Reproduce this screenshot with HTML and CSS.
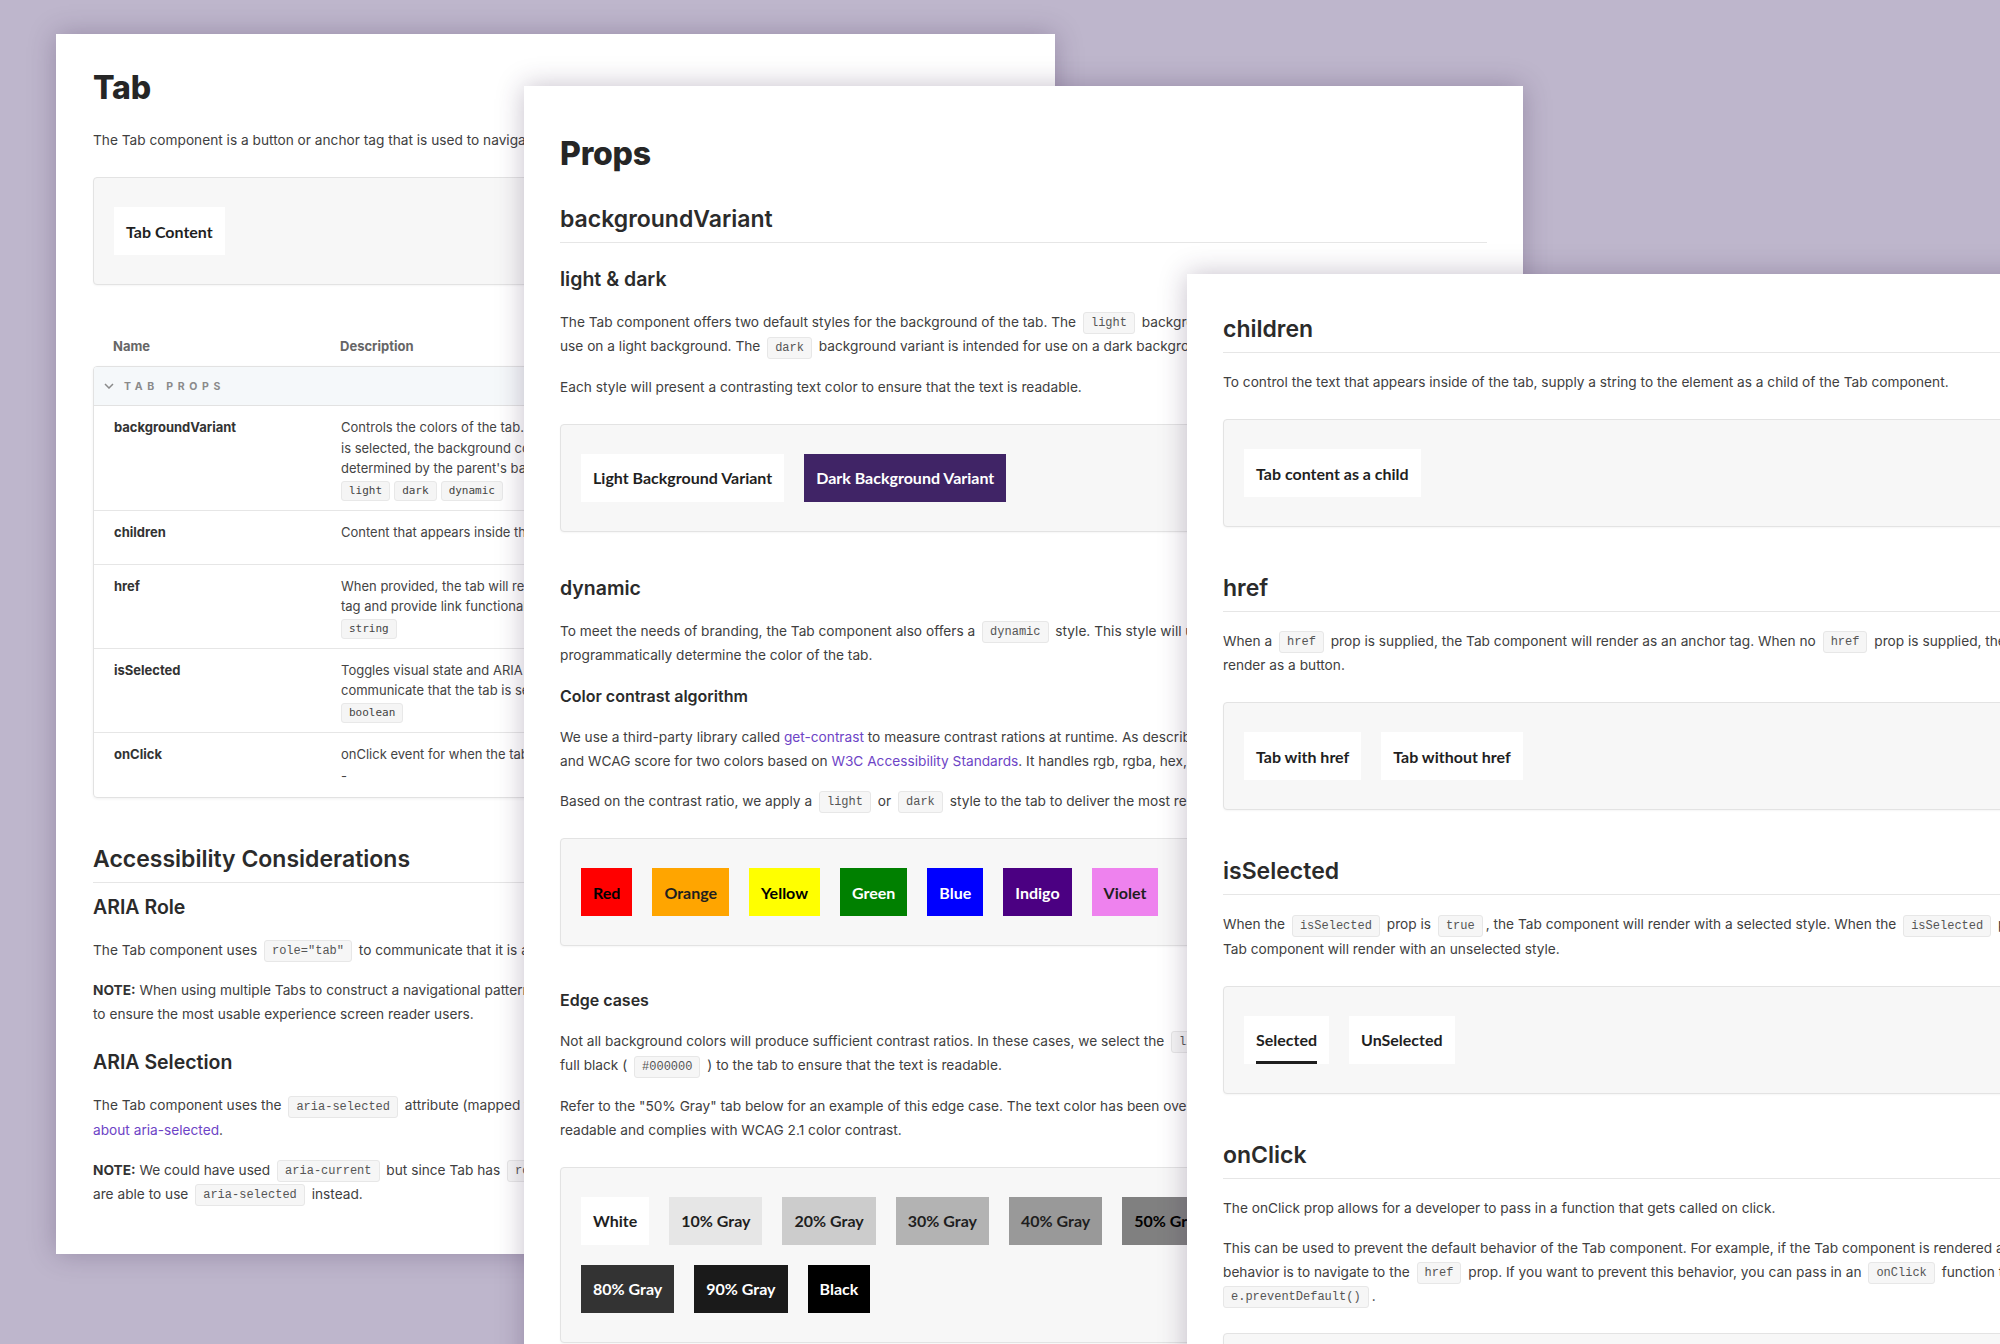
FILE: index.html
```html
<!DOCTYPE html>
<html lang="en">
<head>
<meta charset="utf-8">
<title>Tab docs</title>
<link rel="stylesheet" href="styles.css">
</head>
<body>
<div class="desk">

  <section class="win win-1">
    <h1 class="title title-1">Tab</h1>
    <p class="text">The Tab component is a button or anchor tag that is used to navigate between related views of content within the same page or section.</p>
    <div class="demo">
      <span class="tab">Tab Content</span>
    </div>

    <div class="props-head">
      <span>Name</span>
      <span>Description</span>
    </div>
    <div class="props">
      <div class="group">
        <svg class="chev" width="10" height="6" viewBox="0 0 10 6"><polyline points="1,1 5,5 9,1" fill="none" stroke="#8a8a8a" stroke-width="1.5"/></svg>
        <span class="group-label">TAB PROPS</span>
      </div>
      <div class="row">
        <div class="name">backgroundVariant</div>
        <div class="desc">
          <div>Controls the colors of the tab. When the tab is in its default state and</div>
          <div>is selected, the background color of the tab is either light, dark or</div>
          <div>determined by the parent's background color when dynamic is used.</div>
          <div class="types"><span class="chip-sm">light</span><span class="chip-sm">dark</span><span class="chip-sm">dynamic</span></div>
        </div>
      </div>
      <div class="row">
        <div class="name">children</div>
        <div class="desc">
          <div>Content that appears inside the tab.</div>
          <div class="types-empty"></div>
        </div>
      </div>
      <div class="row">
        <div class="name">href</div>
        <div class="desc">
          <div>When provided, the tab will render as an anchor</div>
          <div>tag and provide link functionality.</div>
          <div class="types"><span class="chip-sm">string</span></div>
        </div>
      </div>
      <div class="row">
        <div class="name">isSelected</div>
        <div class="desc">
          <div>Toggles visual state and ARIA values used to</div>
          <div>communicate that the tab is selected.</div>
          <div class="types"><span class="chip-sm">boolean</span></div>
        </div>
      </div>
      <div class="row">
        <div class="name">onClick</div>
        <div class="desc">
          <div>onClick event for when the tab is clicked.</div>
          <div class="dash">-</div>
        </div>
      </div>
    </div>

    <h2 class="h2 h2-tight">Accessibility Considerations</h2>
    <h3 class="h3 h3-tight">ARIA Role</h3>
    <p class="text">The Tab component uses <code class="code">role="tab"</code> to communicate that it is a tab within a tablist.</p>
    <p class="text"><strong class="strong">NOTE:</strong> When using multiple Tabs to construct a navigational pattern, wrap them in an element with role="tablist"<br>to ensure the most usable experience screen reader users.</p>
    <h3 class="h3">ARIA Selection</h3>
    <p class="text">The Tab component uses the <code class="code">aria-selected</code> attribute (mapped to the isSelected prop) to communicate selection. Learn more<br><a class="link" href="#">about aria-selected</a>.</p>
    <p class="text"><strong class="strong">NOTE:</strong> We could have used <code class="code">aria-current</code> but since Tab has <code class="code">role="tab"</code> we<br>are able to use <code class="code">aria-selected</code> instead.</p>
  </section>

  <section class="win win-2">
    <h1 class="title title-2">Props</h1>
    <h2 class="h2 h2-first">backgroundVariant</h2>
    <h3 class="h3 h3-after-h2">light &amp; dark</h3>
    <p class="text">The Tab component offers two default styles for the background of the tab. The <code class="code">light</code> background variant is intended for<br>use on a light background. The <code class="code">dark</code> background variant is intended for use on a dark background.</p>
    <p class="text">Each style will present a contrasting text color to ensure that the text is readable.</p>
    <div class="demo">
      <span class="tab">Light Background Variant</span>
      <span class="tab tab-dark">Dark Background Variant</span>
    </div>

    <h3 class="h3 after-demo">dynamic</h3>
    <p class="text">To meet the needs of branding, the Tab component also offers a <code class="code">dynamic</code> style. This style will use the parent's background color to<br>programmatically determine the color of the tab.</p>
    <h4 class="h4">Color contrast algorithm</h4>
    <p class="text">We use a third-party library called <a class="link" href="#">get-contrast</a> to measure contrast rations at runtime. As described, it returns the ratio<br>and WCAG score for two colors based on <a class="link" href="#">W3C Accessibility Standards</a>. It handles rgb, rgba, hex, hsl and named colors.</p>
    <p class="text">Based on the contrast ratio, we apply a <code class="code">light</code> or <code class="code">dark</code> style to the tab to deliver the most readable result.</p>
    <div class="demo">
      <span class="tab c-red">Red</span>
      <span class="tab c-orange">Orange</span>
      <span class="tab c-yellow">Yellow</span>
      <span class="tab c-green">Green</span>
      <span class="tab c-blue">Blue</span>
      <span class="tab c-indigo">Indigo</span>
      <span class="tab c-violet">Violet</span>
    </div>

    <h4 class="h4 after-demo">Edge cases</h4>
    <p class="text">Not all background colors will produce sufficient contrast ratios. In these cases, we select the <code class="code">light</code> style and apply<br>full black ( <code class="code">#000000</code> ) to the tab to ensure that the text is readable.</p>
    <p class="text">Refer to the "50% Gray" tab below for an example of this edge case. The text color has been overridden so it is<br>readable and complies with WCAG 2.1 color contrast.</p>
    <div class="demo">
      <span class="tab g-0">White</span>
      <span class="tab g-10">10% Gray</span>
      <span class="tab g-20">20% Gray</span>
      <span class="tab g-30">30% Gray</span>
      <span class="tab g-40">40% Gray</span>
      <span class="tab g-50">50% Gray</span>
      <span class="tab g-60">60% Gray</span>
      <span class="tab g-70">70% Gray</span>
      <span class="tab g-80">80% Gray</span>
      <span class="tab g-90">90% Gray</span>
      <span class="tab g-100">Black</span>
    </div>
  </section>

  <section class="win win-3">
    <h2 class="h2 h2-first">children</h2>
    <p class="text">To control the text that appears inside of the tab, supply a string to the element as a child of the Tab component.</p>
    <div class="demo">
      <span class="tab">Tab content as a child</span>
    </div>

    <h2 class="h2">href</h2>
    <p class="text">When a <code class="code">href</code> prop is supplied, the Tab component will render as an anchor tag. When no <code class="code">href</code> prop is supplied, the Tab component will<br>render as a button.</p>
    <div class="demo">
      <span class="tab">Tab with href</span>
      <span class="tab">Tab without href</span>
    </div>

    <h2 class="h2">isSelected</h2>
    <p class="text">When the <code class="code">isSelected</code> prop is <code class="code">true</code>, the Tab component will render with a selected style. When the <code class="code">isSelected</code> prop is false, the<br>Tab component will render with an unselected style.</p>
    <div class="demo">
      <span class="tab tab-selected">Selected</span>
      <span class="tab">UnSelected</span>
    </div>

    <h2 class="h2">onClick</h2>
    <p class="text">The onClick prop allows for a developer to pass in a function that gets called on click.</p>
    <p class="text">This can be used to prevent the default behavior of the Tab component. For example, if the Tab component is rendered as an anchor, the default<br>behavior is to navigate to the <code class="code">href</code> prop. If you want to prevent this behavior, you can pass in an <code class="code">onClick</code> function that calls<br><code class="code code-first">e.preventDefault()</code>.</p>
    <div class="demo">
      <span class="tab">Tab with onClick</span>
    </div>
  </section>

</div>
</body>
</html>
```
FILE: styles.css
```css
html, body {
  margin: 0;
  padding: 0;
}

body {
  width: 2000px;
  height: 1344px;
  overflow: hidden;
  background: #beb6cc;
  font-family: Inter, "Noto Sans", sans-serif;
  color: #404040;
}

.desk {
  position: relative;
  width: 2000px;
  height: 1344px;
  overflow: hidden;
}

/* windows on the desktop */
.win {
  position: absolute;
  width: 999px;
  box-sizing: border-box;
  background: #fff;
  padding-left: 37px;
  padding-right: 36px;
  box-shadow: 0 0 26px rgba(50, 30, 70, 0.28);
  overflow: hidden;
}

.win-1 {
  left: 56px;
  top: 34px;
  height: 1220px;
  padding-top: 34px;
}

.win-2 {
  left: 524px;
  top: 86px;
  height: 1320px;
  padding-top: 48px;
  padding-left: 36px;
}

.win-3 {
  left: 1187px;
  top: 274px;
  height: 1120px;
  padding-top: 40px;
  padding-left: 36px;
}

/* typography */
.title {
  margin: 0;
  font-size: 32px;
  line-height: 40px;
  font-weight: 800;
  color: #262626;
  letter-spacing: -0.2px;
}

.title-1 { margin-bottom: 20px; }
.title-2 { margin-bottom: 30px; }

.h2 {
  margin: 46px 0 17px;
  padding-bottom: 8px;
  border-bottom: 1px solid #e6e6e6;
  font-size: 23px;
  line-height: 30px;
  font-weight: 600;
  color: #2b2b2b;
}

.h2-first { margin-top: 0; }
.h2-tight { margin-bottom: 10px; }

.h3 {
  margin: 22px 0 17px;
  font-size: 19.5px;
  line-height: 28px;
  font-weight: 600;
  color: #2b2b2b;
}

.h3-tight { margin-top: 10px; }
.h3-after-h2 { margin-top: 22px; }

.h4 {
  margin: 17px 0 17px;
  font-size: 16px;
  line-height: 24px;
  font-weight: 600;
  color: #2b2b2b;
}

.after-demo { margin-top: 42px; }

.text {
  margin: 0 0 16px;
  font-size: 13.7px;
  line-height: 24px;
  white-space: nowrap;
}

.strong {
  font-weight: 700;
  color: #333;
}

.link {
  color: #6d44c6;
  text-decoration: none;
}

.code {
  display: inline-block;
  margin: 0 3px;
  padding: 0 7px;
  font-family: "Liberation Mono", monospace;
  font-size: 12px;
  line-height: 20px;
  color: #555;
  background: #f6f6f6;
  border: 1px solid #e7e7e7;
  border-radius: 3px;
  vertical-align: middle;
}

.code-first { margin-left: 0; }

/* demo area */
.demo {
  margin-top: 25px;
  display: flex;
  flex-wrap: wrap;
  gap: 20px;
  padding: 29px 20px;
  background: #f7f7f7;
  border: 1px solid #e3e3e3;
  border-radius: 4px;
  box-shadow: 0 1px 2px rgba(0, 0, 0, 0.04);
}

.tab {
  position: relative;
  display: flex;
  align-items: center;
  height: 48px;
  padding: 0 12px;
  background: #fff;
  font-family: Lato, "Open Sans", sans-serif;
  font-weight: 700;
  font-size: 16px;
  color: #1f1f1f;
}

.tab-dark { background: #402466; color: #fff; }

.tab-selected::after {
  content: "";
  position: absolute;
  left: 12px;
  right: 12px;
  bottom: 0;
  height: 3px;
  background: #1e1e1e;
}

.c-red { background: #ff0000; color: #000; }
.c-orange { background: #ffa500; color: #1f1f1f; }
.c-yellow { background: #ffff00; color: #000; }
.c-green { background: #008000; color: #fff; }
.c-blue { background: #0000ff; color: #fff; }
.c-indigo { background: #4b0082; color: #fff; }
.c-violet { background: #ee82ee; color: #1f1f1f; }

.g-0 { background: #fff; color: #1f1f1f; }
.g-10 { background: #e6e6e6; color: #1f1f1f; }
.g-20 { background: #cccccc; color: #1f1f1f; }
.g-30 { background: #b3b3b3; color: #1f1f1f; }
.g-40 { background: #999999; color: #1f1f1f; }
.g-50 { background: #808080; color: #000; }
.g-60 { background: #666666; color: #fff; }
.g-70 { background: #4d4d4d; color: #fff; }
.g-80 { background: #333333; color: #fff; }
.g-90 { background: #1a1a1a; color: #fff; }
.g-100 { background: #000; color: #fff; }

/* props table */
.props-head {
  display: grid;
  grid-template-columns: 227px 1fr;
  align-items: center;
  height: 40px;
  margin-top: 41px;
  padding-left: 20px;
  font-size: 13px;
  font-weight: 700;
  color: #666;
}

.props {
  border: 1px solid #e2e2e2;
  border-radius: 4px;
  box-shadow: 0 1px 3px rgba(0, 0, 0, 0.06);
  overflow: hidden;
}

.group {
  display: flex;
  align-items: center;
  gap: 10px;
  height: 38px;
  padding-left: 10px;
  background: #f5f8fa;
  border-bottom: 1px solid #e2e2e2;
}

.group-label {
  font-size: 10.5px;
  font-weight: 700;
  letter-spacing: 4.7px;
  color: #8a8a8a;
}

.row {
  display: grid;
  grid-template-columns: 227px 1fr;
  padding: 11px 0 9px 20px;
  border-bottom: 1px solid #e6e6e6;
}

.row:last-child { border-bottom: 0; }

.name {
  font-size: 13px;
  line-height: 20.5px;
  font-weight: 700;
  color: #333;
}

.desc {
  font-size: 13px;
  line-height: 20.5px;
  color: #444;
  white-space: nowrap;
}

.types {
  display: flex;
  gap: 4px;
  margin-top: 2px;
  height: 20px;
}

.types-empty { height: 12.5px; }

.dash { line-height: 24px; margin-top: 0; }

.chip-sm {
  padding: 0 7px;
  font-family: "DejaVu Sans Mono", monospace;
  font-size: 11px;
  line-height: 18px;
  color: #444;
  background: #f5f5f5;
  border: 1px solid #e8e8e8;
  border-radius: 3px;
}
```
